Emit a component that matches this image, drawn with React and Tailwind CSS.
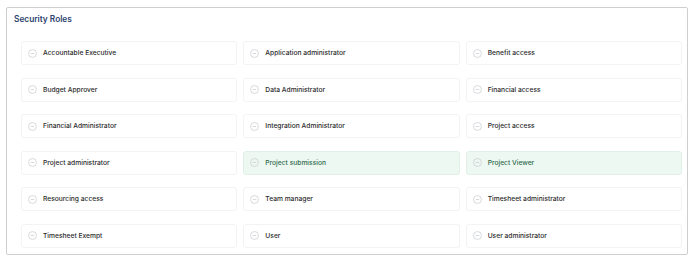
import React from "react";

const roles = [
  ["Accountable Executive", false],
  ["Application administrator", false],
  ["Benefit access", false],
  ["Budget Approver", false],
  ["Data Administrator", false],
  ["Financial access", false],
  ["Financial Administrator", false],
  ["Integration Administrator", false],
  ["Project access", false],
  ["Project administrator", false],
  ["Project submission", true],
  ["Project Viewer", true],
  ["Resourcing access", false],
  ["Team manager", false],
  ["Timesheet administrator", false],
  ["Timesheet Exempt", false],
  ["User", false],
  ["User administrator", false],
];

function MinusCircle() {
  return (
    <svg width="9" height="9" viewBox="0 0 10 10" fill="none" className="shrink-0">
      <circle cx="5" cy="5" r="4.4" stroke="#cdd0d4" strokeWidth="0.9" />
      <line x1="3" y1="5" x2="7" y2="5" stroke="#cdd0d4" strokeWidth="0.9" />
    </svg>
  );
}

export default function App() {
  return (
    <div className="w-[695px] h-[264px] bg-white pt-[7px] pl-[6px]" style={{ fontFamily: "Inter, 'Noto Sans', sans-serif" }}>
      <div className="w-[682px] h-[248px] border border-[#cfcfcf] rounded-[2px] pl-[14px] pr-[5px]">
        <div className="h-[33px] flex items-start -ml-[7px] pt-[5px]">
          <span className="text-[8.3px] leading-[12px] font-semibold text-[#2c4470]">Security Roles</span>
        </div>
        <div className="grid grid-cols-3 gap-x-[6px] gap-y-[12.6px]">
          {roles.map(([name, active]) => (
            <div
              key={name}
              className={
                "h-[24px] rounded-[3px] border flex items-center pl-[6px] gap-[6px] " +
                (active ? "bg-[#eef8f3] border-[#e0f0e7]" : "bg-white border-[#f3f3f3]")
              }
            >
              <MinusCircle />
              <span className={"text-[6.7px] font-medium " + (active ? "text-[#2f6a4c]" : "text-[#2b2b2b]")}>
                {name}
              </span>
            </div>
          ))}
        </div>
      </div>
    </div>
  );
}
